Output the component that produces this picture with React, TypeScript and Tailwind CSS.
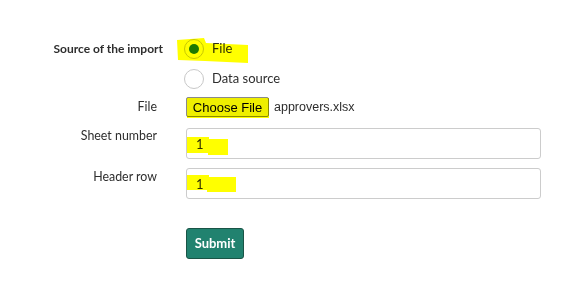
import React from 'react';

const font = { fontFamily: 'Lato, "Open Sans", sans-serif' };

export default function App() {
  return (
    <div className="relative w-[582px] h-[293px] bg-white text-[#2e2e2e]" style={font}>
      <div className="flex flex-col pt-[34px]">
        {/* Source of the import */}
        <div className="flex h-[30px] items-center">
          <div className="w-[163px] text-right text-[12px] font-bold">Source of the import</div>
          <label className="ml-[21px] flex items-center gap-[8px] text-[13px]">
            <span className="flex h-[20px] w-[20px] items-center justify-center rounded-full border border-[#c8c8c8] bg-white">
              <span className="h-[10px] w-[10px] rounded-full bg-[#1d7a1d]" />
            </span>
            File
          </label>
        </div>
        <div className="flex h-[30px] items-center">
          <div className="w-[163px]" />
          <label className="ml-[21px] flex items-center gap-[8px] text-[13px]">
            <span className="h-[20px] w-[20px] rounded-full border border-[#c8c8c8] bg-white" />
            Data source
          </label>
        </div>

        {/* File */}
        <div className="mt-[3px] flex h-[20px] items-center">
          <div className="w-[157px] text-right text-[12.4px]">File</div>
          <div className="ml-[29px] flex items-center gap-[5px]" style={{ fontFamily: '"Liberation Sans", Arial, sans-serif' }}>
            <button className="h-[20px] w-[83px] rounded-[2px] border border-[#8a8a8a] bg-[#efefef] text-[13px] leading-none text-black">
              Choose File
            </button>
            <span className="text-[12.5px]">approvers.xlsx</span>
          </div>
        </div>

        {/* Sheet number */}
        <div className="mt-[11px] flex">
          <div className="w-[157px] text-right text-[12.4px] leading-4">Sheet number</div>
          <input
            readOnly
            value="1"
            className="ml-[29px] h-[31px] w-[355px] rounded-[3px] border border-[#cccccc] px-[9px] pt-[1px] text-[13px] outline-none"
          />
        </div>

        {/* Header row */}
        <div className="mt-[9px] flex">
          <div className="w-[157px] pt-[1px] text-right text-[12.4px] leading-4">Header row</div>
          <input
            readOnly
            value="1"
            className="ml-[29px] h-[31px] w-[355px] rounded-[3px] border border-[#cccccc] px-[9px] pt-[1px] text-[13px] outline-none"
          />
        </div>

        <div className="mt-[29px] flex">
          <div className="w-[186px]" />
          <button className="h-[31px] w-[58px] rounded-[3px] border border-[#1a5446] bg-[#21826f] text-[13px] font-bold text-white">
            Submit
          </button>
        </div>
      </div>

      {/* highlighter marks */}
      <svg className="pointer-events-none absolute left-0 top-0 mix-blend-multiply" width="582" height="293">
        <g fill="#ffff00">
          <polygon points="177,40 204,38 206,43 248,45 248,63 205,61 178,60" />
          <polygon points="187,98 269,98 269,118 187,118" />
          <polygon points="187,137 209,137 209,139 228,139 228,155 208,155 208,153 187,153" />
          <polygon points="187,175 209,175 209,177 236,177 236,192 207,192 207,190 187,190" />
        </g>
      </svg>
    </div>
  );
}
